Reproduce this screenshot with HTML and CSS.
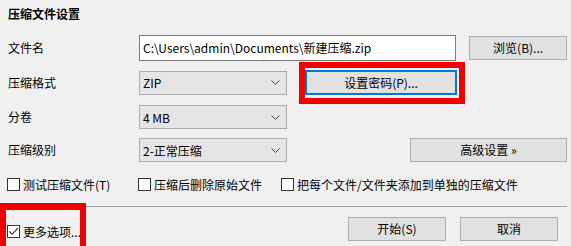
FILE: index.html
```html
<!DOCTYPE html>
<html lang="zh-CN">
<head>
<meta charset="utf-8">
<link rel="stylesheet" href="styles.css">
</head>
<body>
<div class="dialog">
  <div class="title">压缩文件设置</div>
  <div class="form">
    <div class="row row-file">
      <span class="label">文件名</span>
      <div class="input">C:\Users\admin\Documents\新建压缩.zip</div>
      <button class="btn btn-browse">浏览(B)...</button>
    </div>
    <div class="row row-format">
      <span class="label">压缩格式</span>
      <div class="select"><span>ZIP</span><svg class="chev" viewBox="0 0 9 5"><path d="M0.5 0.5 L4.5 4.5 L8.5 0.5" fill="none" stroke="#444" stroke-width="1"/></svg></div>
      <button class="btn btn-pass focus">设置密码(P)...</button>
    </div>
    <div class="row row-split">
      <span class="label">分卷</span>
      <div class="select"><span>4 MB</span><svg class="chev" viewBox="0 0 9 5"><path d="M0.5 0.5 L4.5 4.5 L8.5 0.5" fill="none" stroke="#444" stroke-width="1"/></svg></div>
    </div>
    <div class="row row-level">
      <span class="label">压缩级别</span>
      <div class="select"><span>2-正常压缩</span><svg class="chev" viewBox="0 0 9 5"><path d="M0.5 0.5 L4.5 4.5 L8.5 0.5" fill="none" stroke="#444" stroke-width="1"/></svg></div>
      <button class="btn btn-adv">高级设置 »</button>
    </div>
  </div>
  <div class="checks">
    <label class="check c1"><span class="box"></span>测试压缩文件(T)</label>
    <label class="check c2"><span class="box"></span>压缩后删除原始文件</label>
    <label class="check c3"><span class="box"></span>把每个文件/文件夹添加到单独的压缩文件</label>
  </div>
  <div class="sep"></div>
  <div class="footer">
    <label class="check more"><span class="box checked"><svg viewBox="0 0 11 11"><path d="M1.5 5.5 L4.2 8.3 L9.8 2.2" fill="none" stroke="#222" stroke-width="1.1"/></svg></span>更多选项...</label>
    <div class="actions">
      <button class="btn btn-foot">开始(S)</button>
      <button class="btn btn-foot">取消</button>
    </div>
  </div>
  <div class="mark mark-pass"></div>
  <div class="mark mark-more"></div>
</div>
</body>
</html>
```
FILE: styles.css
```css
* { box-sizing: border-box; }
html, body { margin: 0; padding: 0; }
body {
  background: #f0f0f0;
  font-family: "Noto Sans CJK SC", "Noto Sans", sans-serif;
  font-size: 12px;
  color: #000;
  width: 571px;
  height: 246px;
  overflow: hidden;
}
.dialog {
  position: relative;
  padding: 0 4px 0 8px;
  height: 246px;
}
.title {
  font-weight: bold;
  line-height: 16px;
  padding-top: 6px;
  height: 35px;
}
.form {
  display: flex;
  flex-direction: column;
}
.row {
  display: flex;
  align-items: center;
}
.label {
  width: 131px;
  flex: none;
  line-height: 16px;
}
.row-file { height: 26px; }
.row-format { height: 25px; margin-top: 9px; }
.row-split { height: 24px; margin-top: 10px; }
.row-level { height: 24px; margin-top: 9px; }

.input {
  width: 318px;
  height: 26px;
  background: #fff;
  border: 1px solid #7a7a7a;
  padding: 0 3px;
  line-height: 24px;
  white-space: nowrap;
  overflow: hidden;
}
.select {
  width: 148px;
  height: 24px;
  background: #e5e5e5;
  border: 1px solid #acacac;
  display: flex;
  align-items: center;
  justify-content: space-between;
  padding: 0 6px 0 3px;
}
.chev { width: 9px; height: 5px; }
.btn {
  font-family: inherit;
  font-size: 12px;
  background: #e1e1e1;
  border: 1px solid #adadad;
  color: #000;
  padding: 0;
  height: 24px;
  line-height: 20px;
}
.btn-browse { width: 98px; margin-left: 13px; }
.btn-pass { width: 152px; height: 25px; margin-left: 18px; }
.btn-pass.focus { border: 2px solid #0078d7; }
.btn-adv { width: 157px; margin-left: auto; }

.checks {
  display: flex;
  align-items: center;
  height: 13px;
  margin-top: 16px;
}
.check {
  display: flex;
  align-items: center;
  line-height: 16px;
  white-space: nowrap;
}
.box {
  width: 13px;
  height: 13px;
  border: 1px solid #333;
  background: #fff;
  margin-right: 3px;
  flex: none;
  display: flex;
}
.box svg { width: 11px; height: 11px; }
.c1 { margin-left: -1px; width: 131px; }
.c2 { width: 143px; }
.sep {
  height: 1px;
  background: #a0a0a0;
  margin-top: 15px;
}
.footer {
  display: flex;
  align-items: center;
  margin-top: 10px;
  height: 24px;
}
.more { margin-left: -1px; margin-top: 5px; }
.actions {
  margin-left: auto;
  margin-right: 9px;
  display: flex;
  gap: 14px;
}
.btn-foot { width: 98px; height: 24px; }

.mark {
  position: absolute;
  border: 6px solid #f20000;
  pointer-events: none;
}
.mark-pass { left: 299px; top: 62px; width: 166px; height: 42px; }
.mark-more { left: 0; top: 203px; width: 86px; height: 50px; border-width: 7px 6px; }
```
